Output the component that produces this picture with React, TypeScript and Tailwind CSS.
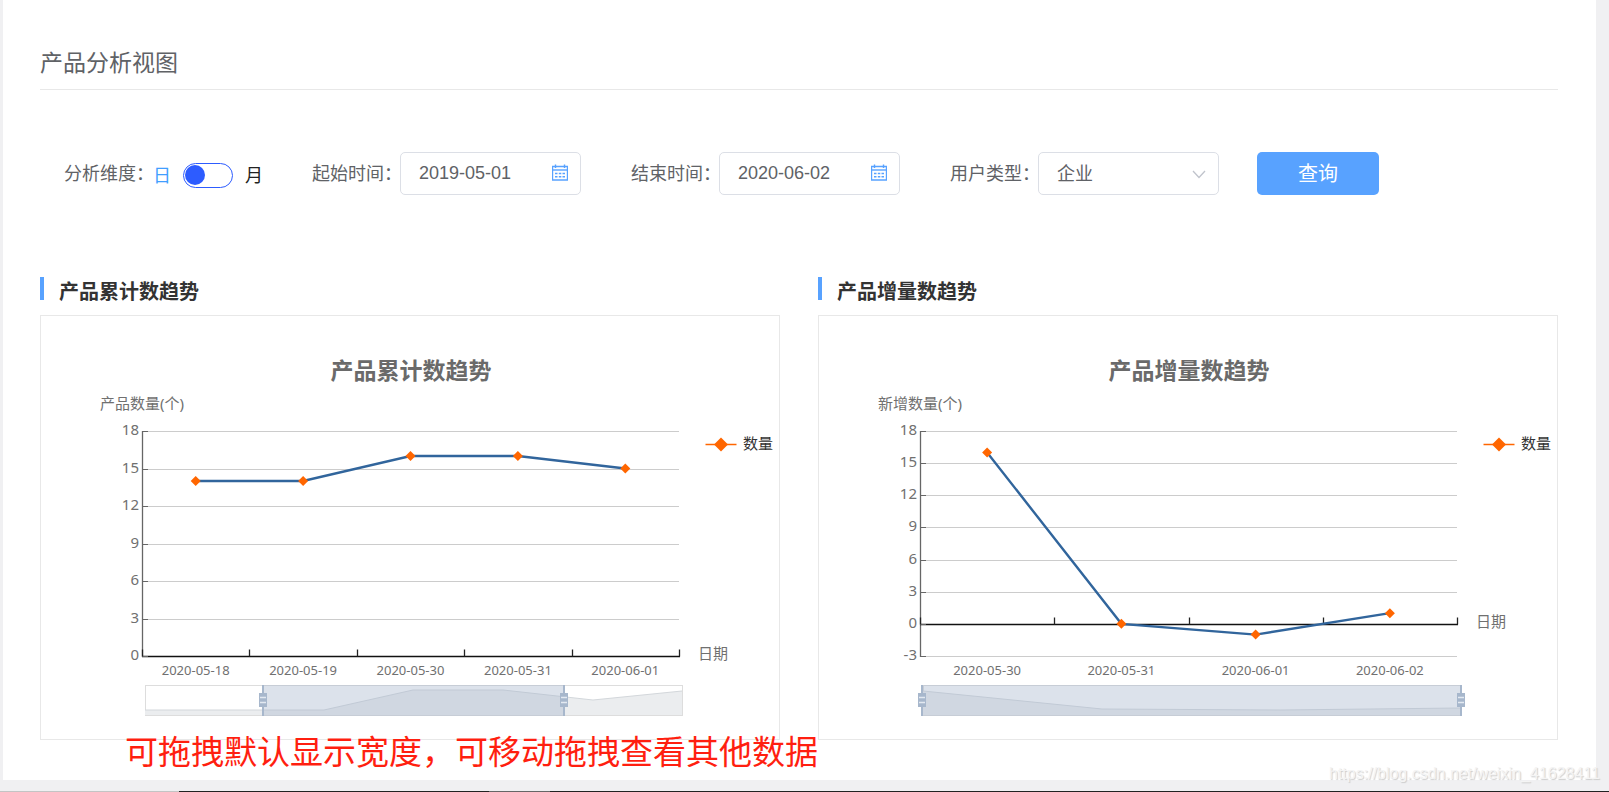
import { useState } from "react";

type Point = { date: string; value: number };

type ChartProps = {
  title: string;
  unit: string;
  min: number;
  max: number;
  data: Point[];
  // overview line inside the zoom bar
  overview: string;
  zoomFrom: number;
  zoomTo: number;
};

const LEFT = 101;
const RIGHT = 638;
const TOP = 115;
const BOTTOM = 340;

function ZoomHandle({ x }: { x: number }) {
  return (
    <g>
      <rect x={x - 1} y={369} width={2} height={31} fill="#a7b7cc" />
      <rect x={x - 4} y={377} width={8} height={14} fill="#a7b7cc" />
      <path d={`M${x - 3} 381.5h6M${x - 3} 386.5h6`} stroke="#e3e9f1" strokeWidth={1.6} />
    </g>
  );
}

function TrendChart({ title, unit, min, max, data, overview, zoomFrom, zoomTo }: ChartProps) {
  const step = (RIGHT - LEFT) / data.length;
  const toY = (v: number) => BOTTOM - ((v - min) / (max - min)) * (BOTTOM - TOP);
  const toX = (i: number) => LEFT + step * (i + 0.5);
  const snap = (n: number) => Math.round(n) + 0.5;

  const levels: number[] = [];
  for (let v = min; v <= max; v += 3) levels.push(v);

  return (
    <svg viewBox="0 0 738 423" className="block w-full h-auto font-['Noto_Sans','Noto_Sans_CJK_SC',sans-serif]" role="img" aria-label={title}>
      <text x={370} y={63} textAnchor="middle" className="text-[23px] font-bold" fill="#6a6a6a">{title}</text>
      <text x={LEFT} y={93} textAnchor="middle" className="text-[15px]" fill="#707070">{unit}</text>

      {levels.map((v) => (
        <g key={v}>
          {v !== 0 && <path d={`M${LEFT} ${snap(toY(v))}H${RIGHT}`} stroke="#ccc" />}
          <text x={98} y={Math.round(toY(v)) + 4} textAnchor="end" className="text-[15px]" fill="#707070">{v}</text>
        </g>
      ))}

      {/* Achsen */}
      <path d={`M${LEFT + 0.5} ${TOP}V${BOTTOM + 1}`} stroke="#666" strokeWidth={1.3} />
      <path d={`M${LEFT} ${snap(toY(0))}H${RIGHT + 1}`} stroke="#111" strokeWidth={1.3} />
      {levels.map((v) => (
        <path key={v} d={`M${LEFT} ${snap(toY(v))}h6`} stroke="#666" />
      ))}
      {[...data, null].map((_, i) => (
        <path key={i} d={`M${snap(LEFT + step * i)} ${snap(toY(0))}v-7`} stroke="#222" strokeWidth={1.3} />
      ))}
      {data.map((p, i) => (
        <text key={p.date} x={toX(i)} y={359} textAnchor="middle" className="text-[13px]" fill="#707070">{p.date}</text>
      ))}
      <text x={657} y={Math.round(toY(0)) + 3} className="text-[15px]" fill="#707070">日期</text>

      {/* Linie */}
      <polyline
        points={data.map((p, i) => `${toX(i)},${toY(p.value)}`).join(" ")}
        fill="none"
        stroke="#31659c"
        strokeWidth={2.4}
      />
      {data.map((p, i) => (
        <path key={p.date} d={`M${toX(i)} ${toY(p.value) - 5}l5 5l-5 5l-5-5z`} fill="#ff6600" />
      ))}

      {/* Legende */}
      <path d="M664.5 128.5h31" stroke="#ff6600" strokeWidth={1.5} />
      <path d="M680 121.5l7 7l-7 7l-7-7z" fill="#ff6600" />
      <text x={702} y={133} className="text-[15px]" fill="#333">数量</text>

      {/* Zoom */}
      <rect x={104.5} y={369.5} width={537} height={30} fill="#fff" stroke="#ddd" />
      <polygon points={`104,399 ${overview} 641,399`} fill="#ebedef" />
      <polyline points={overview} fill="none" stroke="#d3d7db" />
      <rect x={zoomFrom} y={369} width={zoomTo - zoomFrom} height={31} fill="#a7b7cc" fillOpacity={0.4} />
      <ZoomHandle x={zoomFrom} />
      <ZoomHandle x={zoomTo} />
    </svg>
  );
}

function Panel(props: ChartProps) {
  return (
    <section>
      <h2 className="flex items-start gap-[15px] text-xl leading-7 font-bold text-[#333]">
        <span className="w-1 h-[23px] bg-[#58a2ff]" />
        {props.title}
      </h2>
      <div className="mt-[10px] border border-[#e8e8e8]">
        <TrendChart {...props} />
      </div>
    </section>
  );
}

function DateField({ id, label, initial }: { id: string; label: string; initial: string }) {
  const [value, setValue] = useState(initial);
  return (
    <div className="flex items-center">
      <label htmlFor={id} className="w-[88px] pb-1 whitespace-nowrap">{label}</label>
      <div className="relative">
        <input
          id={id}
          type="text"
          value={value}
          onChange={(e) => setValue(e.target.value)}
          className="block w-[181px] h-[43px] pl-[18px] pr-10 border border-[#dcdfe6] rounded-[5px] bg-white text-lg outline-none font-['Liberation_Sans',sans-serif]"
        />
        <svg viewBox="0 0 16 17" className="absolute right-[13px] top-3 w-4 h-[17px]" fill="none" stroke="#58a2ff">
          <path d="M0.5 2.5h15v13.5h-15z" strokeWidth={1.4} />
          <path d="M0.5 6h15" strokeWidth={1.4} />
          <path d="M3.5 0.5v3.5M12.5 0.5v3.5" strokeWidth={1.4} />
          <path d="M3 9.5h2.5M6.8 9.5h2.5M10.5 9.5h2.5M3 12.7h2.5M6.8 12.7h2.5M10.5 12.7h2.5" strokeWidth={1.4} />
        </svg>
      </div>
    </div>
  );
}

export default function App() {
  const [monthly, setMonthly] = useState(false);

  return (
    <div className="bg-[#f0f0f2] font-['Noto_Sans_CJK_SC','Noto_Sans',sans-serif] text-[#606266]">
      <div className="pl-[3px] pr-[13px] pb-[11px]">
        <main className="relative bg-white pl-[37px] pr-[38px] pt-[46px] pb-10">
          <h1 className="pb-[13px] border-b border-[#e8e8e8] text-[23px] leading-[30px]">产品分析视图</h1>

          <form className="mt-[62px] pl-6 flex flex-wrap items-center gap-x-[50px] gap-y-4 text-lg" onSubmit={(e) => e.preventDefault()}>
            <div className="flex items-center">
              <label htmlFor="dimension" className="w-[88px] pb-1 whitespace-nowrap">分析维度：</label>
              <span className="w-[31px] pl-px text-[#409eff]">日</span>
              <input
                id="dimension"
                type="checkbox"
                role="switch"
                checked={monthly}
                onChange={(e) => setMonthly(e.target.checked)}
                className="appearance-none mt-1 w-[50px] h-[25px] rounded-full border border-[#2d5cff] bg-white before:block before:w-5 before:h-5 before:m-px before:rounded-full before:bg-[#2d5cff] before:content-[''] checked:before:ml-[26px]"
              />
              <span className="w-[29px] pl-3 text-[#222]">月</span>
            </div>

            <DateField id="start" label="起始时间：" initial="2019-05-01" />
            <DateField id="end" label="结束时间：" initial="2020-06-02" />

            <div className="flex items-center gap-[38px]">
              <div className="flex items-center">
                <label htmlFor="userType" className="w-[88px] pb-1 whitespace-nowrap">用户类型：</label>
                <div className="relative">
                  <select id="userType" className="block appearance-none w-[181px] h-[43px] pl-[18px] pr-10 pb-1 border border-[#dcdfe6] rounded-[5px] bg-white outline-none">
                    <option>企业</option>
                    <option>个人</option>
                  </select>
                  <svg viewBox="0 0 14 9" className="absolute right-[13px] top-[18px] w-[14px] h-[9px] pointer-events-none" fill="none" stroke="#c0c4cc" strokeWidth={1.3}>
                    <path d="M1 1l6 6.5l6-6.5" />
                  </svg>
                </div>
              </div>
              <button type="submit" className="w-[122px] h-[43px] pb-0.5 rounded-[5px] bg-[#58a2ff] text-white text-xl">查询</button>
            </div>
          </form>

          <div className="mt-[82px] grid grid-cols-2 gap-x-[38px]">
            <Panel
              title="产品累计数趋势"
              unit="产品数量(个)"
              min={0}
              max={18}
              data={[
                { date: "2020-05-18", value: 14 },
                { date: "2020-05-19", value: 14 },
                { date: "2020-05-30", value: 16 },
                { date: "2020-05-31", value: 16 },
                { date: "2020-06-01", value: 15 },
              ]}
              overview="104,394 283,394 372,374 462,374 552,384 641,375"
              zoomFrom={222}
              zoomTo={523}
            />
            <Panel
              title="产品增量数趋势"
              unit="新增数量(个)"
              min={-3}
              max={18}
              data={[
                { date: "2020-05-30", value: 16 },
                { date: "2020-05-31", value: 0 },
                { date: "2020-06-01", value: -1 },
                { date: "2020-06-02", value: 1 },
              ]}
              overview="104,375 283,393 462,394 641,392"
              zoomFrom={103}
              zoomTo={642}
            />
          </div>

          <p className="absolute left-[122px] bottom-[10px] text-[33px] leading-10 whitespace-nowrap text-[#ff1f10]">
            可拖拽默认显示宽度，可移动拖拽查看其他数据
          </p>
          <a
            href="https://blog.csdn.net/weixin_41628411"
            className="absolute -right-1 -bottom-1 text-base leading-5 text-[#f4f4f4] [text-shadow:1px_1px_1px_#ccc] font-['Liberation_Sans',sans-serif]"
          >
            https://blog.csdn.net/weixin_41628411
          </a>
        </main>
      </div>
      <div className="flex h-px bg-[#222]">
        <span className="w-[179px] bg-[#c4c4c4]" />
        <span className="ml-[310px] w-[61px] bg-[#666]" />
      </div>
    </div>
  );
}
